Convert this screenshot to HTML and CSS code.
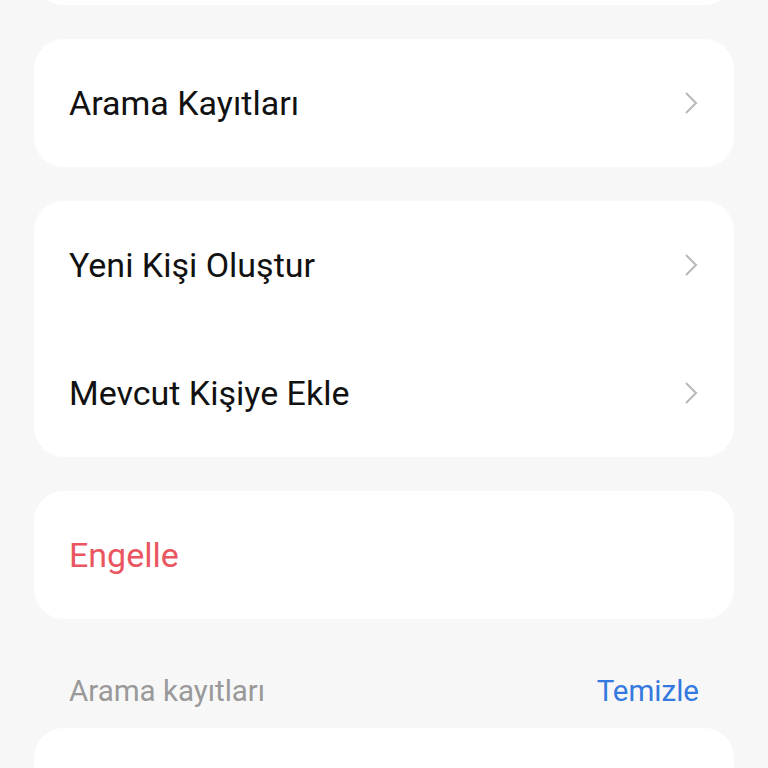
FILE: index.html
```html
<!DOCTYPE html>
<html lang="tr">
  <head>
    <meta charset="UTF-8" />
    <meta name="viewport" content="width=device-width, initial-scale=1.0" />
    <link rel="stylesheet" href="styles.css">
    <title>Kişi Ayrıntıları</title>
  </head>
  <body>
    <div class="page">
      <div class="card top-card"></div>

      <div class="card">
        <div class="row">
          <span class="label">Arama Kayıtları</span>
          <svg class="chevron" viewBox="0 0 14 24"><path d="M2 2 L12 12 L2 22" /></svg>
        </div>
      </div>

      <div class="card">
        <div class="row">
          <span class="label">Yeni Kişi Oluştur</span>
          <svg class="chevron" viewBox="0 0 14 24"><path d="M2 2 L12 12 L2 22" /></svg>
        </div>
        <div class="row">
          <span class="label">Mevcut Kişiye Ekle</span>
          <svg class="chevron" viewBox="0 0 14 24"><path d="M2 2 L12 12 L2 22" /></svg>
        </div>
      </div>

      <div class="card">
        <div class="row">
          <span class="label danger">Engelle</span>
        </div>
      </div>

      <div class="section-head">
        <span class="section-title">Arama kayıtları</span>
        <span class="section-action">Temizle</span>
      </div>

      <div class="card">
        <div class="row"></div>
      </div>
    </div>
  </body>
</html>
```

FILE: styles.css
```css
body {
  margin: 0;
  background-color: #f7f7f7;
  font-family: Roboto, "Noto Sans", sans-serif;
}

.page {
  padding: 0 34px;
  display: flex;
  flex-direction: column;
  gap: 34px;
}

.card {
  background-color: #ffffff;
  border-radius: 30px;
}

.top-card {
  height: 100px;
  margin-top: -95px;
}

.row {
  height: 128px;
  display: flex;
  align-items: center;
  justify-content: space-between;
  padding: 0 36px 0 35px;
}

.label {
  font-size: 34px;
  color: #111111;
}

.danger {
  color: #ea5660;
}

.chevron {
  width: 14px;
  height: 24px;
  fill: none;
  stroke: #b8b8b8;
  stroke-width: 2;
}

/* call log header */
.section-head {
  display: flex;
  justify-content: space-between;
  align-items: center;
  padding: 20px 35px 0 35px;
  margin-bottom: -15px;
  height: 36px;
}

.section-title {
  font-size: 29.5px;
  color: #999999;
}

.section-action {
  font-size: 29.5px;
  color: #3479e0;
}
```
